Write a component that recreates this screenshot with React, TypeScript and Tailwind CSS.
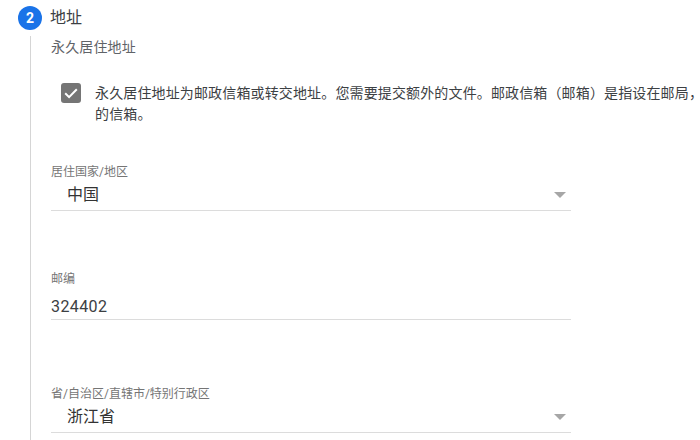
import React from 'react';

const font = { fontFamily: 'Roboto, "Noto Sans CJK SC", sans-serif' };

const Caret: React.FC = () => (
  <svg width="12" height="6" viewBox="0 0 12 6" className="mr-[5px]">
    <path d="M0 0h12L6 6z" fill="#a6a6a6" />
  </svg>
);

const SelectField: React.FC<{ label: string; value: string; className: string }> = ({ label, value, className }) => (
  <div className={`w-[520px] ${className}`}>
    <div className="text-[12px] leading-[16px] text-[#757575]">{label}</div>
    <div className="flex h-[31px] items-center justify-between border-b border-[#dcdcdc] pb-[1px] pl-[16px]">
      <span className="text-[16px] leading-[20px] text-[#333333]">{value}</span>
      <Caret />
    </div>
  </div>
);

export default function App() {
  return (
    <div className="h-[440px] w-[700px] overflow-hidden bg-white" style={font}>
      <div className="flex h-[36px] items-center gap-[8px] pl-[18px]">
        <div className="flex h-[24px] w-[24px] items-center justify-center rounded-full bg-[#1a73e8] text-[14px] font-bold text-white">
          2
        </div>
        <span className="text-[16px] leading-[20px] text-[#3c4043]">地址</span>
      </div>

      <div className="ml-[30px] h-[404px] border-l border-[#d5d5d5] pl-[20px]">
        <div className="pt-[3px] text-[14px] leading-[17px] tracking-[0.14px] text-[#5f6368]">永久居住地址</div>

        <div className="mt-[27px] flex w-[700px] gap-[14px] pl-[10px]">
          <div className="flex h-[20px] w-[20px] shrink-0 items-center justify-center rounded-[3px] bg-[#757575]">
            <svg width="14" height="14" viewBox="0 0 14 14" fill="none">
              <path d="M1.2 7.2l3.9 3.9L12.8 3.2" stroke="#fff" strokeWidth="2" />
            </svg>
          </div>
          <div className="whitespace-nowrap text-[14px] leading-[21px] tracking-[0.14px] text-[#3c4043]">
            永久居住地址为邮政信箱或转交地址。您需要提交额外的文件。邮政信箱（邮箱）是指设在邮局，
          </div>
        </div>
        <div className="pl-[44px] text-[14px] leading-[20px] tracking-[0.14px] text-[#3c4043]">的信箱。</div>

        <SelectField label="居住国家/地区" value="中国" className="mt-[40px]" />

        <div className="mt-[60px] w-[520px]">
          <div className="text-[12px] leading-[16px] text-[#757575]">邮编</div>
          <div className="flex h-[33px] items-center border-b border-[#dcdcdc] pt-[8px] text-[16px] tracking-[0.4px] text-[#3c4043]">
            324402
          </div>
        </div>

        <SelectField label="省/自治区/直辖市/特别行政区" value="浙江省" className="mt-[66px]" />
      </div>
    </div>
  );
}
